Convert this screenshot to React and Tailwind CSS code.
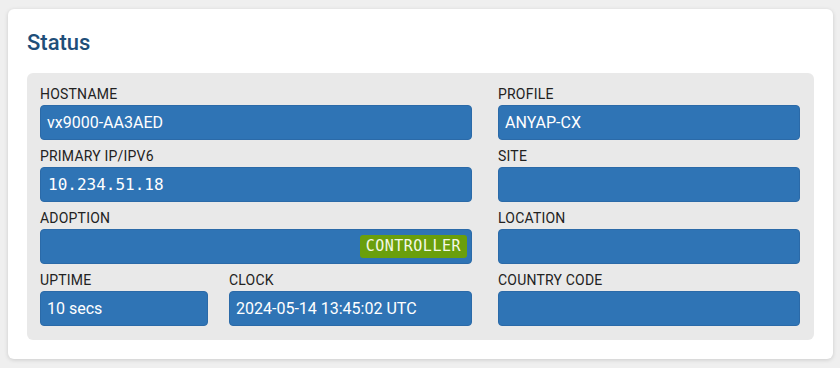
const Field = ({ label, children, className = '' }) => (
  <div className={`flex flex-col ${className}`}>
    <div className="text-[14px] leading-[16px] tracking-[0.2px] text-[#222] mb-[3px]">{label}</div>
    <div className="h-[35px] rounded-[4px] bg-[#2f74b5] border border-[#2b6aa8] flex items-center px-[6px] text-white text-[16px]">
      {children}
    </div>
  </div>
);

export default function App() {
  return (
    <div className="w-[840px] h-[368px] bg-[#efefef] pl-[8px] pt-[9px]" style={{ fontFamily: 'Roboto, "Liberation Sans", sans-serif' }}>
      <div className="w-[825px] h-[350px] bg-white rounded-[6px] shadow-[0_1px_4px_rgba(0,0,0,0.15)] pt-[20px] px-[19px]">
        <h2 className="text-[22px] leading-[28px] font-medium text-[#1f4e79]">Status</h2>
        <div className="mt-[16px] w-[787px] bg-[#e9e9e9] rounded-[6px] pt-[13px] px-[13px] pb-[14px] grid grid-cols-[432px_302px] gap-x-[26px] gap-y-[8px]">
          <Field label="HOSTNAME">vx9000-AA3AED</Field>
          <Field label="PROFILE">ANYAP-CX</Field>
          <Field label="PRIMARY IP/IPV6">
            <span className="text-[16px] pl-[1px]" style={{ fontFamily: '"DejaVu Sans Mono", "Liberation Mono", monospace' }}>10.234.51.18</span>
          </Field>
          <Field label="SITE" />
          <div className="flex flex-col">
            <div className="text-[14px] leading-[16px] tracking-[0.2px] text-[#222] mb-[3px]">ADOPTION</div>
            <div className="h-[35px] rounded-[4px] bg-[#2f74b5] border border-[#2b6aa8] flex items-center justify-end pr-[4px]">
              <span className="h-[23px] px-[6px] rounded-[3px] bg-[#6a9f0c] text-[#f4f8e6] text-[15px] flex items-center tracking-[0.5px]" style={{ fontFamily: '"DejaVu Sans Mono", "Liberation Mono", monospace' }}>CONTROLLER</span>
            </div>
          </div>
          <Field label="LOCATION" />
          <div className="grid grid-cols-[168px_243px] gap-x-[21px]">
            <Field label="UPTIME">10 secs</Field>
            <Field label="CLOCK">2024-05-14 13:45:02 UTC</Field>
          </div>
          <Field label="COUNTRY CODE" />
        </div>
      </div>
    </div>
  );
}
